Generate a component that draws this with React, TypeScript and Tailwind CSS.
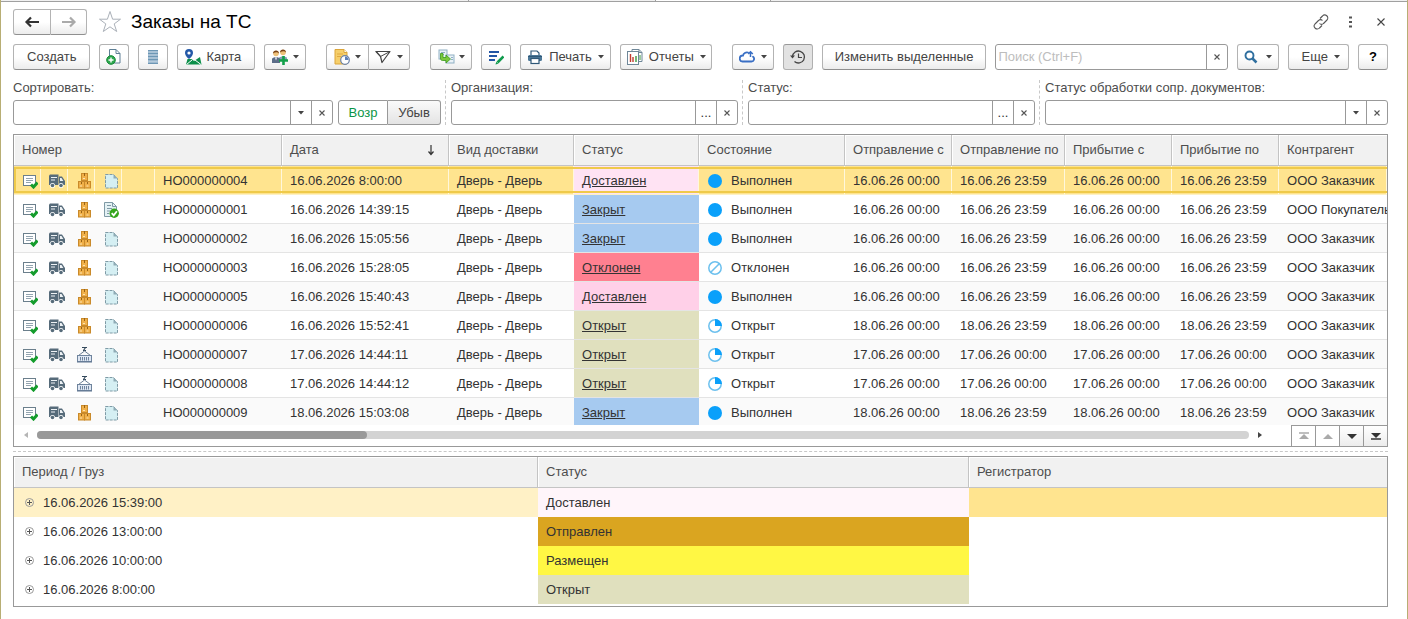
import { useState } from 'react';
import type { ReactNode } from 'react';

type Order = {
  id: string;
  date: string;
  status: string;
  state: string;
  from: string;
  to: string;
  client: string;
  container?: boolean;
  accepted?: boolean;
};

const orders: Order[] = [
  { id: 'НО000000004', date: '16.06.2026 8:00:00', status: 'Доставлен', state: 'Выполнен', from: '16.06.26 00:00', to: '16.06.26 23:59', client: 'ООО Заказчик' },
  { id: 'НО000000001', date: '16.06.2026 14:39:15', status: 'Закрыт', state: 'Выполнен', from: '16.06.26 00:00', to: '16.06.26 23:59', client: 'ООО Покупатель', accepted: true },
  { id: 'НО000000002', date: '16.06.2026 15:05:56', status: 'Закрыт', state: 'Выполнен', from: '16.06.26 00:00', to: '16.06.26 23:59', client: 'ООО Заказчик' },
  { id: 'НО000000003', date: '16.06.2026 15:28:05', status: 'Отклонен', state: 'Отклонен', from: '16.06.26 00:00', to: '16.06.26 23:59', client: 'ООО Заказчик' },
  { id: 'НО000000005', date: '16.06.2026 15:40:43', status: 'Доставлен', state: 'Выполнен', from: '16.06.26 00:00', to: '16.06.26 23:59', client: 'ООО Заказчик' },
  { id: 'НО000000006', date: '16.06.2026 15:52:41', status: 'Открыт', state: 'Открыт', from: '18.06.26 00:00', to: '18.06.26 23:59', client: 'ООО Заказчик' },
  { id: 'НО000000007', date: '17.06.2026 14:44:11', status: 'Открыт', state: 'Открыт', from: '17.06.26 00:00', to: '17.06.26 00:00', client: 'ООО Заказчик', container: true },
  { id: 'НО000000008', date: '17.06.2026 14:44:12', status: 'Открыт', state: 'Открыт', from: '17.06.26 00:00', to: '17.06.26 00:00', client: 'ООО Заказчик', container: true },
  { id: 'НО000000009', date: '18.06.2026 15:03:08', status: 'Закрыт', state: 'Выполнен', from: '18.06.26 00:00', to: '18.06.26 23:59', client: 'ООО Заказчик' },
];

const history = [
  { date: '16.06.2026 15:39:00', status: 'Доставлен', color: 'bg-[#fff5fa]' },
  { date: '16.06.2026 13:00:00', status: 'Отправлен', color: 'bg-[#daa520]' },
  { date: '16.06.2026 10:00:00', status: 'Размещен', color: 'bg-[#fff744]' },
  { date: '16.06.2026 8:00:00', status: 'Открыт', color: 'bg-[#e0e0be]' },
];

const getStatusColor = (status: string) => {
  switch (status) {
    case 'Доставлен': return 'bg-[#ffd0e8]';
    case 'Закрыт': return 'bg-[#a6caf0]';
    case 'Отклонен': return 'bg-[#ff8090]';
    default: return 'bg-[#e0e0be]';
  }
};

const Svg = ({ children, w = 16, h = 16 }: { children: ReactNode; w?: number; h?: number }) => (
  <svg width={w} height={h} viewBox={`0 0 ${w} ${h}`} fill="none" className="shrink-0" aria-hidden="true">
    {children}
  </svg>
);

const Caret = () => (
  <Svg w={6} h={4}><path d="M0 0h6L3 3.500z" fill="#444" /></Svg>
);

const Cross = () => (
  <Svg w={6} h={6}><path d="M.5.500l5 5M5.500.500l-5 5" stroke="#555" strokeWidth="1.100" /></Svg>
);

const DocAddIcon = () => (
  <Svg w={16} h={18}>
    <path d="M3.500 1.500h6.500l4 4v9.500h-10.500z" fill="#fff" stroke="#5f7f95" />
    <path d="M10 1.500v4h4" stroke="#5f7f95" />
    <circle cx="5" cy="12" r="4.300" fill="#2fa84f" stroke="#158a37" />
    <path d="M5 9.500v5M2.500 12h5" stroke="#fff" strokeWidth="1.400" />
  </Svg>
);

const ListIcon = () => (
  <Svg w={12} h={16}>
    <rect x="1" y="1" width="10" height="14" fill="#9db9cf" />
    <path d="M1 1.500h10M1 4.500h10M1 7.500h10M1 10.500h10M1 14.500h10" stroke="#6d97b5" />
    <path d="M1.500 3h9M1.500 6h9M1.500 9h9M1.500 12.500h9" stroke="#b5cbdc" />
  </Svg>
);

const MapIcon = () => (
  <Svg w={18} h={18}>
    <path d="M2 16.500l1.500-5.500h4l2.500 2 6-4 1.500 7.500z" fill="#0c8f4a" />
    <path d="M2.500 16.500l5.500-4.500M9 10.500l8 6" stroke="#fff" />
    <path d="M5 1a4 4 0 0 1 4 4c0 3-4 6-4 6S1 8 1 5a4 4 0 0 1 4-4z" fill="#2459a8" />
    <circle cx="5" cy="5" r="1.600" fill="#fff" />
  </Svg>
);

const PeopleIcon = () => (
  <Svg w={18} h={16}>
    <circle cx="5" cy="4.500" r="2.800" fill="#efc27a" />
    <path d="M2 4.500C2 .500 8 .500 8 4.500 6 2.500 4 3.500 2 4.500z" fill="#7a4317" />
    <circle cx="12" cy="3.500" r="2.800" fill="#efc27a" />
    <path d="M9 3.500C9-.500 15-.500 15 3.500 13 1.500 11 2.500 9 3.500z" fill="#7a4317" />
    <path d="M8 12V9c0-2 8-2 8 0v3z" fill="#8aa0b8" />
    <path d="M1 14v-4c0-2.500 8-2.500 8 0v4z" fill="#5c6d88" />
    <path d="M4 8.500l1 3 1-3z" fill="#fff" />
    <path d="M12.500 7v9M8 11.500h9" stroke="#13a04a" strokeWidth="2.600" />
  </Svg>
);

const DocClockIcon = () => (
  <Svg w={17} h={16}>
    <path d="M1 .500h9l3 3v11.500H1z" fill="#f6cf6b" stroke="#dba53a" />
    <path d="M10 .500v3h3" fill="#fff" stroke="#dba53a" />
    <path d="M3 5h6M3 7.500h4" stroke="#e0a940" />
    <circle cx="11" cy="11" r="4.300" fill="#fff" stroke="#6b82a8" strokeWidth="1.200" />
    <path d="M11 11V7.500a3.500 3.500 0 0 1 3.500 3.500z" fill="#5b7fb8" />
  </Svg>
);

const SendIcon = () => (
  <Svg w={16} h={16}>
    <path d="M1 2.500h14L7 13.500l-1.500-6z" stroke="#444" strokeWidth="1.200" strokeLinejoin="round" />
    <path d="M1 2.500l4.500 5L15 2.500" stroke="#444" />
  </Svg>
);

const CopyIcon = () => (
  <Svg w={17} h={16}>
    <rect x="1" y="1" width="8" height="9" fill="#eaf2f7" stroke="#8fb0c4" />
    <path d="M3 3.500h4M3 5.500h3" stroke="#8fb0c4" />
    <rect x="8" y="6" width="8" height="8" fill="#eaf2f7" stroke="#8fb0c4" />
    <path d="M13 8.500h2M13 10.500h2" stroke="#8fb0c4" />
    <path d="M5 4.500v4h3V6l4.500 4L8 14v-2.500H4.500C3 11.500 2.500 10.500 2.500 9V4.500z" fill="#7cc83c" stroke="#3a9a1c" strokeWidth=".8" />
  </Svg>
);

const EditLinesIcon = () => (
  <Svg w={16} h={16}>
    <path d="M1 3h10M1 7h8M1 11h6" stroke="#2456a6" strokeWidth="2" />
    <path d="M9.500 13.500l6-6" stroke="#0f9a4c" strokeWidth="2.600" />
    <path d="M7.500 15.500l.8-2.800 2 2z" fill="#0f9a4c" />
  </Svg>
);

const PrinterIcon = () => (
  <Svg w={16} h={16}>
    <path d="M4 6V2h6l2 2v2" fill="#fff" stroke="#2f5878" strokeWidth="1.200" />
    <rect x="1" y="6" width="14" height="6" rx="1.500" fill="#4b7797" />
    <path d="M1 7.500h14" stroke="#2f5878" />
    <rect x="4" y="9.500" width="8" height="5" fill="#fff" stroke="#2f5878" strokeWidth="1.200" />
  </Svg>
);

const ReportIcon = () => (
  <Svg w={16} h={16}>
    <path d="M5 3V.500h7l3 3v9h-3" fill="#fff" stroke="#6f8798" />
    <path d="M12 .500v3h3" stroke="#6f8798" />
    <rect x=".5" y="2.500" width="11" height="13" fill="#fff" stroke="#6f8798" />
    <path d="M3.500 5v8M6 8v5" stroke="#c23b2e" strokeWidth="1.400" />
    <path d="M9 7v6" stroke="#3a9a3c" strokeWidth="1.400" />
    <path d="M13 6v5" stroke="#3a9a3c" />
  </Svg>
);

const CloudIcon = () => (
  <Svg w={16} h={14}>
    <path d="M9 2.500A4 4 0 0 0 4 5.500a3 3 0 0 0-.5 6h9a2.600 2.600 0 0 0 1.500-4.700" stroke="#3a6fc4" strokeWidth="1.800" strokeLinecap="round" />
    <path d="M11.500 7V2M9.200 4l2.300-2.300L13.800 4" stroke="#3a6fc4" strokeWidth="1.500" />
  </Svg>
);

const HistoryIcon = () => (
  <Svg w={16} h={16}>
    <path d="M2.500 7.500A6 6 0 1 1 4.500 12.500" stroke="#444" strokeWidth="1.300" />
    <path d="M0 6.500h5L2.500 9.500z" fill="#444" />
    <path d="M8.500 4.500v4H12" stroke="#444" strokeWidth="1.200" />
  </Svg>
);

const SearchIcon = () => (
  <Svg w={14} h={14}>
    <circle cx="5.500" cy="5.500" r="4" stroke="#2f6f9f" strokeWidth="1.900" />
    <path d="M8.500 8.500l4 4" stroke="#2f6f9f" strokeWidth="2.500" />
  </Svg>
);

const NoteCheckIcon = () => (
  <Svg>
    <rect x="1.500" y="2.500" width="12" height="10" fill="#fff" stroke="#6b7f8c" />
    <path d="M4 5.500h7M4 7.500h7M4 9.500h5" stroke="#93a4b0" />
    <path d="M9 11.500l2.500 2.500 4-4.500" stroke="#149c2c" strokeWidth="3" />
  </Svg>
);

const TruckIcon = () => (
  <Svg>
    <path d="M1 1.500h8.500V12H0V2.500z" fill="#566b7a" />
    <path d="M10 3.500h3l3 4.500v4h-6z" fill="#566b7a" />
    <path d="M11 5h1.500l1.800 3H11z" fill="#eef2f5" />
    <path d="M2 4.500h6M2 7h4" stroke="#eef2f5" strokeWidth="1.200" />
    <circle cx="3.500" cy="12.500" r="2.500" fill="#fff" />
    <circle cx="12" cy="12.500" r="2.500" fill="#fff" />
    <circle cx="3.500" cy="12.500" r="1.800" fill="#566b7a" />
    <circle cx="12" cy="12.500" r="1.800" fill="#566b7a" />
  </Svg>
);

const BoxesIcon = () => (
  <Svg>
    <rect x="5.500" y=".5" width="6" height="7" fill="#f0b049" stroke="#c98a2b" />
    <rect x="2.500" y="8.500" width="6" height="6.500" fill="#f0b049" stroke="#c98a2b" />
    <rect x="8.500" y="8.500" width="6" height="6.500" fill="#f0b049" stroke="#c98a2b" />
    <path d="M8.500 0v3M5.500 9v2M11.500 9v2" stroke="#9a6416" />
    <path d="M7 5.500h2M4 13h2M10.500 13h2" stroke="#fbe3b4" />
  </Svg>
);

const ContainerIcon = () => (
  <Svg>
    <path d="M6 .500h5M7 3.500h3M9.500.500l-2 3" stroke="#34495c" strokeWidth="1.200" />
    <path d="M2.500 8.500l6-4.500 6 4.500" stroke="#6b7f95" />
    <rect x="1.500" y="8.500" width="14" height="6" fill="#dfe7f3" stroke="#6f849d" />
    <path d="M4.500 10v3.500M6.500 10v3.500M8.500 10v3.500M10.500 10v3.500M12.500 10v3.500" stroke="#6f849d" />
    <path d="M1 15h15" stroke="#5f7590" />
  </Svg>
);

const PageIcon = () => (
  <Svg>
    <path d="M2.500 1.500h8l4 4v9.500h-12z" fill="#d5eff3" />
    <path d="M2.500 1.500h8l4 4v9.500h-12z" stroke="#7f9ba6" strokeDasharray="3 1" />
    <path d="M10.500 1.500v4h4z" fill="#8fabb5" />
  </Svg>
);

const PageOkIcon = () => (
  <Svg>
    <path d="M1.500.500h8l4 4v10h-12z" fill="#e4f1f4" stroke="#7f9aa5" />
    <path d="M9.500.500v4h4M4 3.500h4M4 6.500h5M4 9h3M4 11.500h2" stroke="#7f9aa5" />
    <circle cx="11.200" cy="11.200" r="4.700" fill="#35a51c" />
    <path d="M8.700 11.200l2 2.100 3.200-4" stroke="#fff" strokeWidth="1.800" />
  </Svg>
);

const StateIcon = ({ state }: { state: string }) => {
  if (state === 'Выполнен') return <Svg><circle cx="8" cy="8" r="7" fill="#0aa0fa" /></Svg>;
  return (
    <Svg>
      <circle cx="8" cy="8" r="6.200" fill="#fff" stroke="#6cc0ee" strokeWidth="1.500" />
      {state === 'Отклонен'
        ? <path d="M4 12l8-8" stroke="#6cc0ee" strokeWidth="1.600" />
        : <path d="M8 8V1a7 7 0 0 1 7 7z" fill="#0aa0fa" />}
    </Svg>
  );
};

const btn = 'h-[26px] shrink-0 flex items-center justify-center border border-[#b3b3b3] border-b-[#8f8f8f] bg-linear-to-b from-white from-50% to-[#ececec] text-[#444]';

const Button = ({ children, label, className }: { children: ReactNode; label?: string; className: string }) => (
  <button type="button" aria-label={label} className={`${btn} ${className}`}>{children}</button>
);

// Text box with two small buttons at its right end
const Field = ({ id, label, kind }: { id: string; label: string; kind: 'list' | 'pick' }) => (
  <div className="flex-1 min-w-0">
    <label htmlFor={id} className="block h-5 leading-4 whitespace-nowrap text-[#4d4d4d]">{label}</label>
    <div className="h-[25px] flex border border-[#999] rounded-[3px] bg-white">
      {kind === 'list'
        ? <select id={id} className="flex-1 min-w-0 px-1 appearance-none outline-none" />
        : <input id={id} type="text" className="flex-1 min-w-0 px-1 outline-none" />}
      <button type="button" aria-label="Выбрать" className="w-[21px] border-l border-[#999] flex items-center justify-center">
        {kind === 'list' ? <Caret /> : '...'}
      </button>
      <button type="button" aria-label="Очистить" className="w-[21px] border-l border-[#999] flex items-center justify-center">
        <Cross />
      </button>
    </div>
  </div>
);

const Divider = () => <div className="ml-1 mr-[5px] border-l border-dashed border-[#c8c8c8]" />;

const th = 'h-[31px] px-2 text-left font-normal text-[#4d4d4d] bg-[#f1f1f1] border-b border-r border-[#c4c4c4] whitespace-nowrap shadow-[inset_1px_1px_0_#fff]';

// Selection frame: hangs on the first cell, spans the whole row
const frame = 'after:absolute after:inset-x-0 after:top-px after:bottom-[2px] after:border-2 after:border-r-0 after:border-[#efca4a]';

const App = () => {
  const [selected, setSelected] = useState('НО000000004');
  const [ascending, setAscending] = useState(true);

  return (
    <div className="min-h-screen bg-white border-x border-[#b8ae74] font-['Liberation_Sans',Arial,sans-serif] text-[13px] leading-4 text-[#333]">
      <div className="h-[2px] flex border-b border-[#a0a0a0] bg-[#f1f1f1]">
        <div className="w-[468px] border-r border-[#a0a0a0]" />
        <div className="w-[187px] border-r border-[#a0a0a0]" />
        <div className="w-[115px] border-r border-[#a0a0a0] bg-white" />
      </div>
      <div className="pl-3 pr-[19px] pt-2">
        {/* Title */}
        <header className="flex items-center h-6">
          <div className="flex">
            <Button label="Назад" className="w-[38px] h-[24px] rounded-l-[3px]">
              <Svg><path d="M3 8h12" stroke="#333" strokeWidth="2" /><path d="M7 3.500L2.500 8 7 12.500" stroke="#333" strokeWidth="2.200" /></Svg>
            </Button>
            <Button label="Вперед" className="w-9 h-[24px] rounded-r-[3px] border-l-0">
              <Svg><path d="M1 8h12" stroke="#aaa" strokeWidth="2" /><path d="M9 3.500l4.500 4.500L9 12.500" stroke="#aaa" strokeWidth="2.200" /></Svg>
            </Button>
          </div>
          <button type="button" aria-label="Избранное" className="ml-[11px]">
            <Svg w={24} h={24}><path d="M12 1.500l2.600 7.700h7.900l-6.300 4.700 2.500 7.600-6.700-4.700-6.700 4.700 2.500-7.600L1.500 9.200h7.900z" stroke="#aab0b8" /></Svg>
          </button>
          <h1 className="ml-[9px] text-[19px] leading-6 text-black">Заказы на ТС</h1>
          <div className="ml-auto flex items-center gap-[13px] pr-[3px]">
            <button type="button" aria-label="Ссылка">
              <Svg>
                <path d="M7 4.500l2.500-2.500a2.700 2.700 0 0 1 4.500 4L10.500 9.500a2.700 2.700 0 0 1-4 0" stroke="#555" strokeWidth="1.100" />
                <path d="M9 11.500L6.500 14a2.700 2.700 0 0 1-4.500-4L5.500 6.500a2.700 2.700 0 0 1 4 0" stroke="#555" strokeWidth="1.100" />
              </Svg>
            </button>
            <button type="button" aria-label="Меню">
              <Svg><path d="M7 2.500h3v2H7zM7 7h3v2H7zM7 11.500h3v2H7z" fill="#555" /></Svg>
            </button>
            <button type="button" aria-label="Закрыть" className="pl-[6px]">
              <Svg w={8} h={8}><path d="M.5.500l7 7M7.500.500l-7 7" stroke="#444" strokeWidth="1.100" /></Svg>
            </button>
          </div>
        </header>

        {/* Toolbar */}
        <div className="mt-[10px] flex gap-[9px]">
          <Button className="px-[13px] rounded-[3px]">Создать</Button>
          <Button label="Скопировать" className="w-[30px] rounded-[3px]"><DocAddIcon /></Button>
          <Button label="Список" className="w-[30px] rounded-[3px]"><ListIcon /></Button>
          <Button className="pl-[6px] pr-[13px] gap-1 rounded-[3px]"><MapIcon />Карта</Button>
          <Button label="Участники" className="w-[42px] gap-1 rounded-[3px]"><PeopleIcon /><Caret /></Button>
          <div className="ml-[11px] flex">
            <Button label="Запланировать" className="w-[43px] gap-1 rounded-l-[3px]"><DocClockIcon /><Caret /></Button>
            <Button label="Отправить" className="w-[41px] gap-[6px] rounded-r-[3px] border-l-0"><SendIcon /><Caret /></Button>
          </div>
          <Button label="Создать на основании" className="ml-[11px] w-[42px] gap-1 rounded-[3px]"><CopyIcon /><Caret /></Button>
          <Button label="Изменить" className="w-[30px] rounded-[3px]"><EditLinesIcon /></Button>
          <Button className="px-[6px] gap-[6px] rounded-[3px]"><PrinterIcon /><span>Печать</span><Caret /></Button>
          <Button className="pl-[6px] pr-[5px] gap-[6px] rounded-[3px]"><ReportIcon /><span>Отчеты</span><Caret /></Button>
          <Button label="Обмен" className="ml-[11px] w-[42px] gap-[6px] rounded-[3px]"><CloudIcon /><Caret /></Button>
          <button type="button" aria-label="История" className="h-[26px] w-[30px] shrink-0 flex items-center justify-center rounded-[3px] border border-[#b0b0b0] border-t-[#999] bg-[#e2e2e2]"><HistoryIcon /></button>
          <Button className="px-3 rounded-[3px]">Изменить выделенные</Button>
          <div className="h-[26px] flex-1 min-w-0 flex border border-[#999] rounded-[3px]">
            <input type="search" aria-label="Поиск" placeholder="Поиск (Ctrl+F)" className="flex-1 min-w-0 px-[2px] outline-none placeholder:text-[#bdbdbd]" />
            <button type="button" aria-label="Очистить поиск" className="w-[21px] border-l border-[#999] flex items-center justify-center"><Cross /></button>
          </div>
          <Button label="Найти" className="w-[42px] gap-2 rounded-[3px]"><SearchIcon /><Caret /></Button>
          <Button className="pl-[13px] pr-2 gap-[6px] rounded-[3px]"><span>Еще</span><Caret /></Button>
          <Button className="w-[30px] rounded-[3px] font-bold text-black">?</Button>
        </div>

        {/* Filters */}
        <div className="mt-[10px] flex">
          <div className="flex-[428_1_0px] min-w-0 flex items-end gap-[5px]">
            <Field id="sort" label="Сортировать:" kind="list" />
            <div className="flex">
              <button
                type="button"
                onClick={() => setAscending(true)}
                className={`h-[25px] w-[50px] border border-[#999] rounded-l-[3px] ${ascending ? 'bg-white text-[#0a9546]' : 'bg-[#ededed] text-[#444]'}`}
              >
                Возр
              </button>
              <button
                type="button"
                onClick={() => setAscending(false)}
                className={`h-[25px] w-[53px] border border-l-0 border-[#999] rounded-r-[3px] ${ascending ? 'bg-linear-to-b from-[#fafafa] to-[#e4e4e4] text-[#444]' : 'bg-white text-[#0a9546]'}`}
              >
                Убыв
              </button>
            </div>
          </div>
          <Divider />
          <div className="flex-[287_1_0px] min-w-0 flex"><Field id="org" label="Организация:" kind="pick" /></div>
          <Divider />
          <div className="flex-[287_1_0px] min-w-0 flex"><Field id="status" label="Статус:" kind="pick" /></div>
          <Divider />
          <div className="flex-[343_1_0px] min-w-0 flex"><Field id="docs" label="Статус обработки сопр. документов:" kind="list" /></div>
        </div>

        {/* Orders */}
        <div className="mt-[9px] border border-[#999]">
          <div className="h-[290px] overflow-hidden">
            <table className="w-full table-fixed border-separate border-spacing-0">
              <colgroup>
                <col className="w-[27px]" />
                <col className="w-[27px]" />
                <col className="w-[27px]" />
                <col className="w-[27px]" />
                <col className="w-[33px]" />
                <col className="w-[127px]" />
                <col className="w-[167px]" />
                <col className="w-[125px]" />
                <col className="w-[125px]" />
                <col className="w-[146px]" />
                <col className="w-[107px]" />
                <col className="w-[113px]" />
                <col className="w-[107px]" />
                <col className="w-[107px]" />
                <col />
              </colgroup>
              <thead>
                <tr>
                  <th colSpan={6} className={th}>Номер</th>
                  <th className={th}>
                    <span className="flex items-center justify-between pr-[5px]">
                      Дата
                      <Svg w={8} h={12}><path d="M4 1v9M1.500 7.500L4 10.500l2.500-3" stroke="#333" strokeWidth="1.200" /></Svg>
                    </span>
                  </th>
                  <th className={th}>Вид доставки</th>
                  <th className={th}>Статус</th>
                  <th className={th}>Состояние</th>
                  <th className={th}>Отправление с</th>
                  <th className={th}>Отправление по</th>
                  <th className={th}>Прибытие с</th>
                  <th className={th}>Прибытие по</th>
                  <th className={`${th} border-r-0`}>Контрагент</th>
                </tr>
              </thead>
              <tbody>
                {orders.map((order, idx) => {
                  const active = order.id === selected;
                  const line = active ? 'border-b border-b-[#fdf1c4] border-r border-r-[#fff7dc]' : 'border-b border-[#e4e4e4]';
                  const td = `h-[29px] pl-2 pt-[2px] whitespace-nowrap ${line}`;
                  return (
                    <tr
                      key={order.id}
                      onClick={() => setSelected(order.id)}
                      className={active ? 'relative bg-[#ffe48f]' : idx % 2 ? 'bg-white' : 'bg-[#fafafa]'}
                    >
                      <td className={active ? `${td} ${frame}` : td}><NoteCheckIcon /></td>
                      <td className={td}><TruckIcon /></td>
                      <td className={td}>{order.container ? <ContainerIcon /> : <BoxesIcon />}</td>
                      <td className={td}>{order.accepted ? <PageOkIcon /> : <PageIcon />}</td>
                      <td className={td} />
                      <td className={td}>{order.id}</td>
                      <td className={td}>{order.date}</td>
                      <td className={td}>Дверь - Дверь</td>
                      <td className={`${td} underline ${active ? 'bg-[#ffe3f3]' : getStatusColor(order.status)}`}>{order.status}</td>
                      <td className={td}>
                        <span className="flex items-center gap-2"><StateIcon state={order.state} />{order.state}</span>
                      </td>
                      <td className={td}>{order.from}</td>
                      <td className={td}>{order.to}</td>
                      <td className={td}>{order.from}</td>
                      <td className={td}>{order.to}</td>
                      <td className={td}>{order.client}</td>
                    </tr>
                  );
                })}
              </tbody>
            </table>
          </div>
          <div className="flex h-[21px]">
            <div className="flex-1 flex items-center gap-[9px] pl-[9px] pr-7 pb-[2px]">
              <Svg w={5} h={8}><path d="M5 1v6L1 4z" fill="#b5b5b5" /></Svg>
              <div className="flex-1 h-2 rounded-full bg-[#d3d3d3]">
                <div className="h-2 w-[330px] rounded-full bg-[#999]" />
              </div>
              <Svg w={5} h={8}><path d="M0 1v6l4-3z" fill="#444" /></Svg>
            </div>
            <div className="flex border-t border-[#999]">
              <button type="button" aria-label="В начало" className="w-6 border-l border-[#999] flex items-center justify-center">
                <Svg w={10} h={8}><path d="M0 1h10" stroke="#aaa" strokeWidth="1.500" /><path d="M5 2l5 5H0z" fill="#aaa" /></Svg>
              </button>
              <button type="button" aria-label="Вверх" className="w-6 border-l border-[#999] flex items-center justify-center">
                <Svg w={10} h={8}><path d="M5 2l5 5H0z" fill="#aaa" /></Svg>
              </button>
              <button type="button" aria-label="Вниз" className="w-6 border-l border-[#999] bg-linear-to-b from-white to-[#ececec] flex items-center justify-center">
                <Svg w={10} h={8}><path d="M0 2h10L5 7z" fill="#333" /></Svg>
              </button>
              <button type="button" aria-label="В конец" className="w-6 border-l border-[#999] bg-linear-to-b from-white to-[#ececec] flex items-center justify-center">
                <Svg w={10} h={8}><path d="M0 1h10L5 6z" fill="#333" /><path d="M0 7h10" stroke="#333" strokeWidth="1.500" /></Svg>
              </button>
            </div>
          </div>
        </div>

        <div className="mt-1 mb-1 border-t border-dashed border-[#c8c8c8]" />

        {/* Status history */}
        <div className="border border-[#999] pb-[2px]">
          <table className="w-full table-fixed border-separate border-spacing-0">
            <colgroup>
              <col className="w-[524px]" />
              <col className="w-[431px]" />
              <col />
            </colgroup>
            <thead>
              <tr>
                <th className={th}>Период / Груз</th>
                <th className={th}>Статус</th>
                <th className={`${th} border-r-0`}>Регистратор</th>
              </tr>
            </thead>
            <tbody>
              {history.map((row, idx) => (
                <tr key={row.date}>
                  <td className={`h-[29px] pl-[10px] ${idx === 0 ? 'bg-[#fff1c6]' : ''}`}>
                    <span className="flex items-center gap-2">
                      <Svg w={11} h={11}>
                        <circle cx="5.500" cy="5.500" r="4" stroke="#999" />
                        <path d="M5.500 3v5M3 5.500h5" stroke="#555" />
                      </Svg>
                      {row.date}
                    </span>
                  </td>
                  <td className={`pl-2 ${row.color}`}>{row.status}</td>
                  <td className={idx === 0 ? 'bg-[#ffe48f]' : ''} />
                </tr>
              ))}
            </tbody>
          </table>
        </div>
      </div>
    </div>
  );
};

export default App;
